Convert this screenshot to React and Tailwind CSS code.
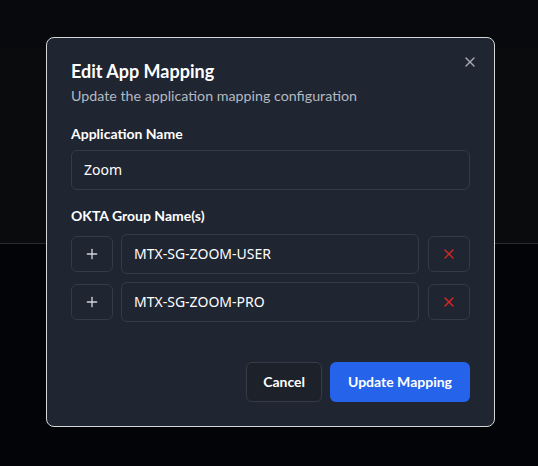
import { X, Plus } from "lucide-react";

function GroupRow({ value }) {
  return (
    <div className="flex items-center gap-2">
      <button className="flex h-9 w-[42px] shrink-0 items-center justify-center rounded-md border border-[#353b46] text-[#d1d5db]">
        <Plus className="h-4 w-4" strokeWidth={2} />
      </button>
      <div className="flex h-10 flex-1 items-center rounded-md border border-[#353b46] px-3 font-['Noto_Sans',sans-serif] text-sm text-white">
        {value}
      </div>
      <button className="ml-px flex h-9 w-[42px] shrink-0 items-center justify-center rounded-md border border-[#353b46] text-[#dc2626]">
        <X className="h-4 w-4" strokeWidth={2} />
      </button>
    </div>
  );
}

export default function App() {
  return (
    <div className="relative h-[466px] w-[538px] overflow-hidden bg-[#030407] font-['Lato','Noto_Sans',sans-serif]">
      {/* page behind the overlay */}
      <div className="h-[48px] bg-[#08090c]" />
      <div className="h-[196px] border-b border-[#2a2b2e] bg-[#0a0b0d]" />

      {/* dialog */}
      <div className="absolute left-[46px] top-[37px] w-[449px] rounded-lg border border-[#d4d6da] bg-[#1f2531] p-6">
        <button className="absolute right-4 top-4 text-[#a3a8b1]">
          <X className="h-4 w-4" strokeWidth={2} />
        </button>

        <div className="flex flex-col gap-1.5">
          <h2 className="text-lg font-bold leading-none text-white">
            Edit App Mapping
          </h2>
          <p className="text-[14.25px] leading-5 text-[#b4b9c2]">
            Update the application mapping configuration
          </p>
        </div>

        <div className="mt-[18px] flex flex-col gap-1.5">
          <label className="text-sm font-bold leading-5 text-white">Application Name</label>
          <div className="flex h-10 items-center rounded-md border border-[#353b46] px-3 font-['Noto_Sans',sans-serif] text-sm text-white">
            Zoom
          </div>
        </div>

        <div className="mt-4 flex flex-col gap-2">
          <label className="text-sm font-bold leading-5 text-white">OKTA Group Name(s)</label>
          <GroupRow value="MTX-SG-ZOOM-USER" />
          <GroupRow value="MTX-SG-ZOOM-PRO" />
        </div>

        <div className="mt-10 flex justify-end gap-2">
          <button className="h-10 rounded-md border border-[#363c47] bg-[#1c212a] px-4 text-sm font-bold text-white">
            Cancel
          </button>
          <button className="h-10 rounded-md bg-[#2563eb] px-[18px] text-sm font-bold text-white">
            Update Mapping
          </button>
        </div>
      </div>
    </div>
  );
}
